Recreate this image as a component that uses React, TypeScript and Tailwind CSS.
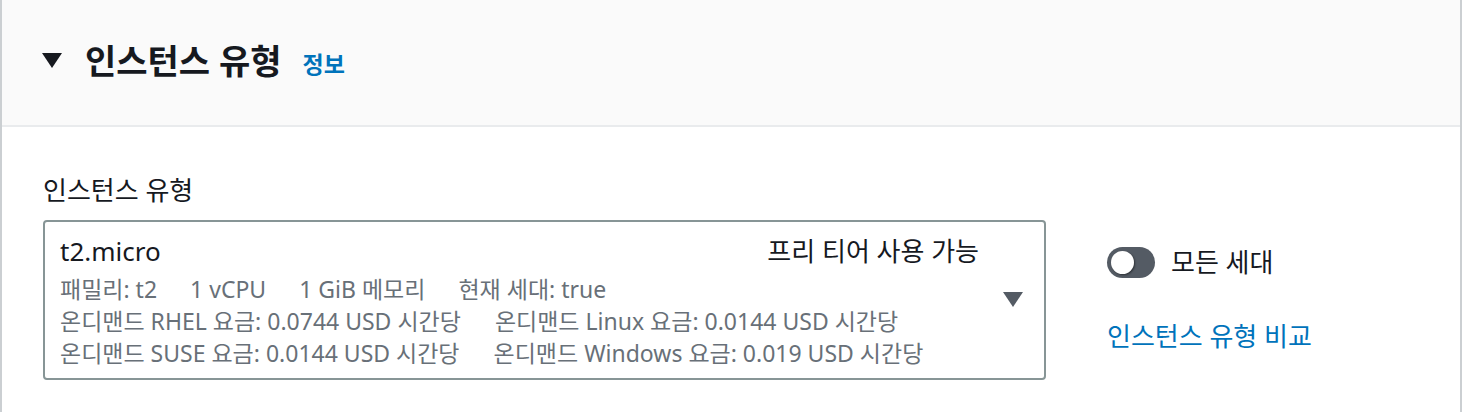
export default function App() {
  const font = { fontFamily: '"Noto Sans", "Noto Sans CJK KR", sans-serif' }
  return (
    <div className="h-[412px] w-[1462px] overflow-hidden bg-white" style={font}>
      <div className="h-full border-x-2 border-[#cbcfd2] bg-white">
        {/* 헤더 */}
        <div className="flex h-[127px] items-center border-b-2 border-[#e9ebed] bg-[#fafafa] pb-[4px] pl-[40px]">
          <svg width="20" height="16" viewBox="0 0 20 16" className="mt-[1px] shrink-0">
            <polygon points="0,0 20,0 10,15" fill="#16191f" />
          </svg>
          <h2 className="ml-[23px] text-[34px] font-bold leading-[40px] text-[#16191f]">인스턴스 유형</h2>
          <a className="ml-[21px] mt-[6px] text-[23px] font-bold leading-[30px] text-[#0073bb]">정보</a>
        </div>

        {/* 본문 */}
        <div className="pl-[41px] pt-[47px]">
          <div className="text-[26px] leading-[32px] text-[#16191f]">인스턴스 유형</div>
          <div className="mt-[14px] flex items-start">
            <div className="flex h-[160px] w-[1003px] items-center rounded-[4px] border-2 border-[#879596] pl-[15px] pr-[21px]">
              <div className="flex flex-1 flex-col self-stretch pt-[13px]">
                <div className="flex items-start justify-between">
                  <span className="text-[26px] leading-[32px] text-[#16191f]">t2.micro</span>
                  <span className="text-[26px] leading-[32px] text-[#16191f]">프리 티어 사용 가능</span>
                </div>
                <div className="mt-[6px] text-[23px] leading-[32px] text-[#687078]">
                  <div className="flex gap-x-[33px]">
                    <span>패밀리: t2</span>
                    <span>1 vCPU</span>
                    <span>1 GiB 메모리</span>
                    <span>현재 세대: true</span>
                  </div>
                  <div className="flex gap-x-[34px]">
                    <span>온디맨드 RHEL 요금: 0.0744 USD 시간당</span>
                    <span>온디맨드 Linux 요금: 0.0144 USD 시간당</span>
                  </div>
                  <div className="flex gap-x-[34px]">
                    <span>온디맨드 SUSE 요금: 0.0144 USD 시간당</span>
                    <span>온디맨드 Windows 요금: 0.019 USD 시간당</span>
                  </div>
                </div>
              </div>
              <svg width="20" height="16" viewBox="0 0 20 16" className="ml-[24px] shrink-0">
                <polygon points="0,0 20,0 10,15" fill="#545b64" />
              </svg>
            </div>

            <div className="ml-[61px] flex flex-col pt-[26px]">
              <div className="flex items-center gap-[16px]">
                <div className="flex h-[31px] w-[48px] items-center rounded-full bg-[#545b64] px-[4px]">
                  <div className="h-[23px] w-[23px] rounded-full bg-white shadow-[1px_1px_2px_rgba(0,0,0,0.45)]" />
                </div>
                <span className="text-[26px] leading-[32px] text-[#16191f]">모든 세대</span>
              </div>
              <a className="mt-[42px] text-[26px] leading-[32px] text-[#0073bb]">인스턴스 유형 비교</a>
            </div>
          </div>
        </div>
      </div>
    </div>
  )
}
